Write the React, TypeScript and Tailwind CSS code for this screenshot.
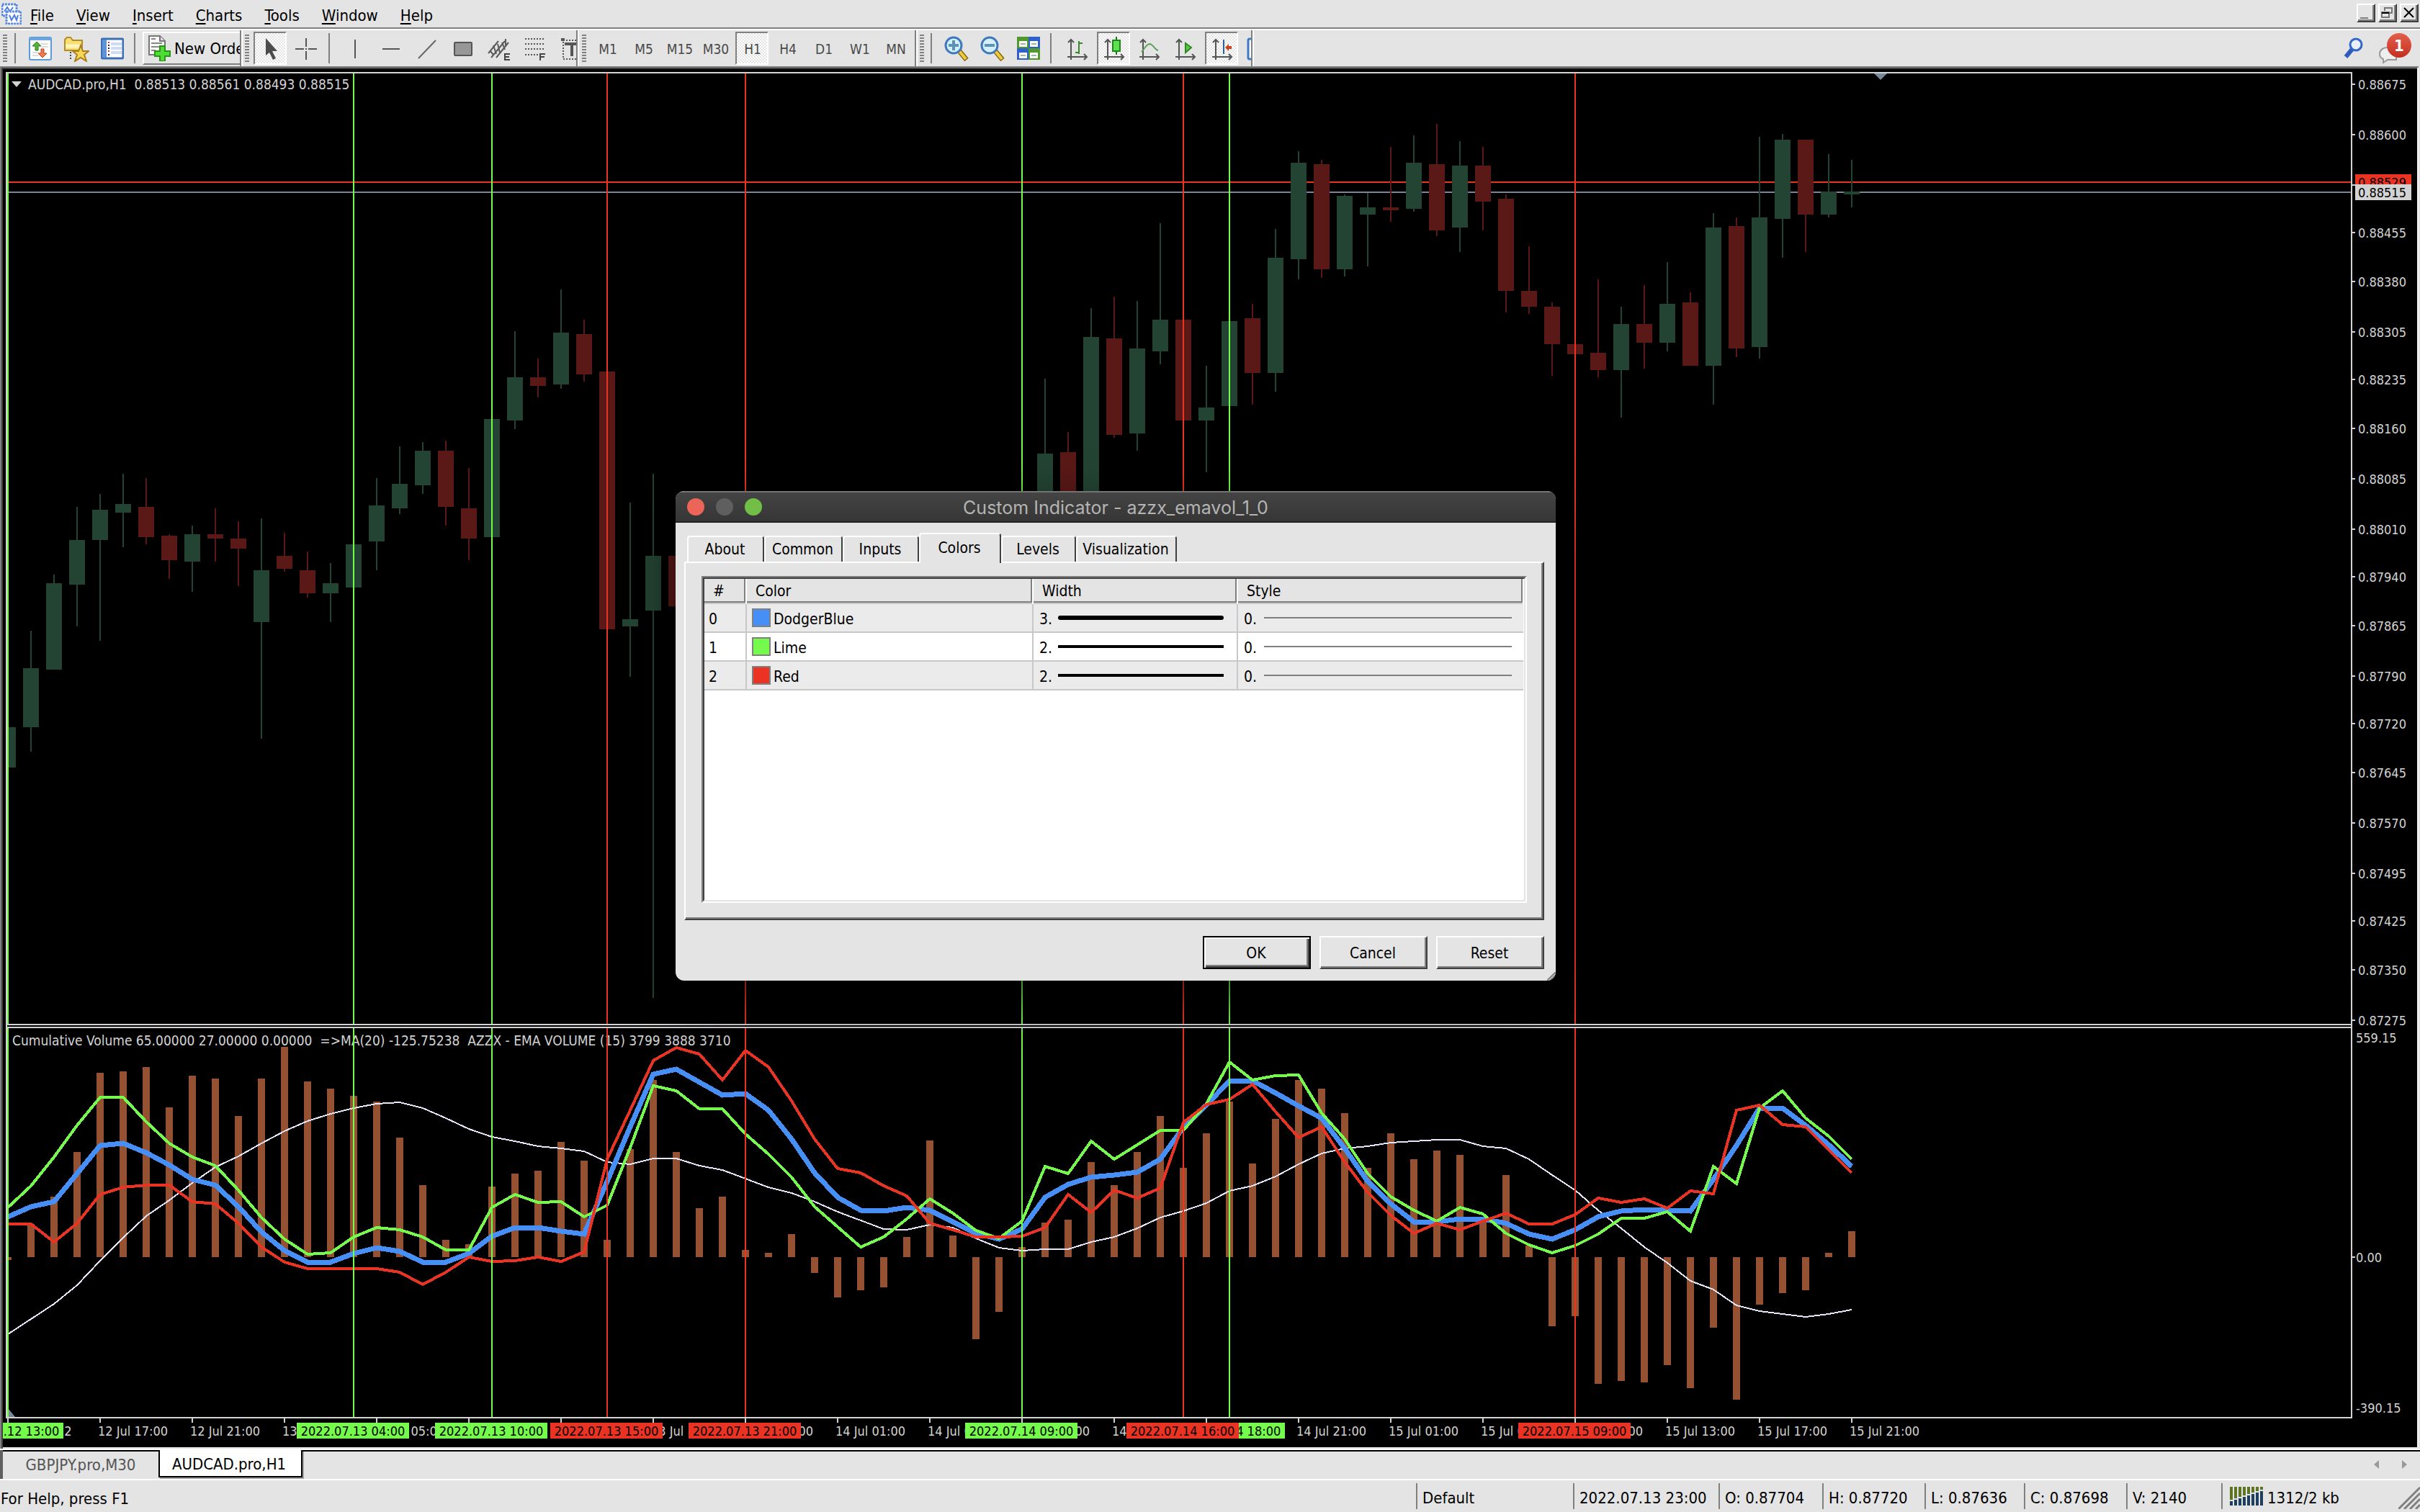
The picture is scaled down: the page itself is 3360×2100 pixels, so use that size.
import React from "react";

const SANS = "font-['DejaVu_Sans_Condensed','DejaVu_Sans',sans-serif]";

const GREEN = "#75fb4c";
const RED = "#eb3323";
const BLUE = "#458ff7";
const BAR = "#945233";
const BULL = "#244433";
const BEAR = "#5a1917";
const AXIS = "#d3d3d3";

const BAR_STEP = 32;
const barX = (index: number) => 11 + index * BAR_STEP;

type Candle = [index: number, up: 0 | 1, high: number, top: number, bottom: number, low: number];

const candles: Candle[] = [
  [0, 1, 1010, 1010, 1066, 1066],
  [1, 1, 876, 928, 1010, 1044],
  [2, 1, 798, 810, 930, 930],
  [3, 1, 704, 750, 812, 870],
  [4, 1, 686, 708, 750, 890],
  [5, 1, 658, 700, 712, 760],
  [6, 0, 664, 704, 746, 756],
  [7, 0, 742, 744, 778, 804],
  [8, 1, 730, 742, 780, 822],
  [9, 0, 706, 742, 748, 780],
  [10, 0, 724, 748, 762, 814],
  [11, 1, 720, 792, 864, 1026],
  [12, 0, 740, 772, 790, 794],
  [13, 0, 766, 792, 824, 830],
  [14, 1, 782, 810, 824, 864],
  [15, 1, 756, 756, 816, 816],
  [16, 1, 664, 702, 752, 792],
  [17, 1, 620, 672, 706, 714],
  [18, 1, 614, 626, 674, 686],
  [19, 0, 612, 626, 704, 730],
  [20, 0, 650, 706, 748, 778],
  [21, 1, 582, 582, 746, 746],
  [22, 1, 460, 524, 584, 596],
  [23, 0, 498, 524, 536, 552],
  [24, 1, 402, 462, 534, 540],
  [25, 0, 444, 464, 520, 530],
  [26, 0, 516, 516, 874, 874],
  [27, 1, 698, 860, 870, 940],
  [28, 1, 658, 772, 848, 1386],
  [29, 0, 772, 772, 842, 842],
  [45, 1, 526, 630, 720, 720],
  [46, 0, 600, 628, 720, 720],
  [47, 1, 428, 468, 720, 720],
  [48, 0, 412, 470, 604, 608],
  [49, 1, 418, 484, 602, 626],
  [50, 1, 310, 444, 488, 506],
  [51, 0, 444, 444, 584, 584],
  [52, 1, 508, 566, 584, 656],
  [53, 1, 446, 446, 564, 564],
  [54, 0, 422, 442, 518, 562],
  [55, 1, 318, 358, 518, 544],
  [56, 1, 210, 226, 360, 388],
  [57, 0, 222, 228, 374, 386],
  [58, 1, 270, 272, 374, 384],
  [59, 1, 268, 288, 298, 370],
  [60, 0, 204, 288, 292, 308],
  [61, 1, 188, 226, 290, 294],
  [62, 0, 172, 228, 320, 328],
  [63, 1, 196, 230, 316, 350],
  [64, 0, 204, 230, 280, 320],
  [65, 0, 270, 276, 404, 434],
  [66, 0, 342, 404, 426, 436],
  [67, 0, 420, 426, 478, 522],
  [68, 0, 478, 478, 492, 492],
  [69, 0, 388, 490, 514, 524],
  [70, 1, 426, 450, 514, 580],
  [71, 0, 396, 450, 476, 512],
  [72, 1, 364, 422, 476, 488],
  [73, 0, 406, 420, 508, 508],
  [74, 1, 296, 316, 508, 562],
  [75, 0, 302, 314, 484, 496],
  [76, 1, 190, 302, 482, 498],
  [77, 1, 186, 194, 304, 358],
  [78, 0, 194, 194, 298, 350],
  [79, 1, 214, 266, 298, 302],
  [80, 1, 222, 266, 270, 288],
];

const ZERO_Y = 1746;

const volumeEnds = [
  1750, 1700, 1662, 1600, 1490, 1488, 1482, 1538, 1494, 1498, 1550, 1498, 1454, 1502, 1512, 1522, 1530, 1580, 1646,
  1722, 1728, 1648, 1630, 1626, 1586, 1612, 1722, 1596, 1500, 1600, 1678, 1662, 1736, 1740, 1714, 1768, 1802, 1792,
  1788, 1718, 1584, 1716, 1860, 1822, 1732, 1698, 1694, 1614, 1646, 1600, 1550, 1622, 1574, 1530, 1616, 1554, 1500,
  1512, 1546, 1622, 1574, 1610, 1598, 1604, 1694, 1632, 1730, 1842, 1828, 1922, 1918, 1920, 1896, 1928, 1844, 1944,
  1812, 1796, 1792, 1740, 1710,
];

const upper = [
  725, 645, 540, 425, 323, 323, 412, 492, 541, 573, 660, 760, 838, 893, 888, 832, 798, 805, 831, 878, 878, 725, 677,
  705, 704, 757, 717, 508, 283, 301, 365, 367, 458, 530, 614, 722, 795, 868, 832, 765, 692, 745, 808, 835, 773, 576,
  601, 483, 549, 496, 444, 443, 348, 196, 262, 245, 243, 382, 476, 600, 685, 735, 774, 723, 748, 818, 860, 888, 863,
  820, 762, 763, 740, 810, 575, 638, 362, 300, 400, 464, 550,
];

const middle = [
  757, 722, 702, 602, 500, 490, 525, 570, 622, 642, 720, 812, 880, 922, 922, 892, 870, 883, 922, 922, 890, 829, 796,
  798, 811, 820, 630, 430, 240, 223, 268, 316, 310, 372, 475, 598, 688, 734, 738, 723, 733, 776, 818, 838, 803, 688,
  641, 615, 605, 597, 550, 433, 352, 264, 264, 308, 355, 400, 510, 630, 712, 776, 776, 766, 766, 780, 820, 838, 806,
  758, 736, 731, 734, 736, 622, 500, 362, 362, 425, 497, 575,
];

const lower = [
  785, 785, 848, 780, 677, 650, 642, 642, 704, 712, 780, 868, 922, 945, 945, 945, 945, 958, 1004, 960, 903, 920, 917,
  903, 920, 885, 550, 370, 192, 143, 168, 262, 155, 215, 338, 475, 582, 598, 646, 682, 782, 806, 830, 830, 829, 797,
  677, 741, 660, 690, 652, 415, 350, 331, 277, 375, 470, 431, 558, 670, 752, 817, 780, 805, 773, 745, 784, 784, 750,
  690, 706, 692, 727, 665, 673, 372, 353, 422, 431, 515, 598,
];

const average = [
  1184, 1130, 1075, 1005, 918, 833, 755, 698, 635, 577, 538, 492, 446, 409, 383, 363, 348, 342, 362, 399, 440, 467,
  484, 503, 509, 520, 560, 567, 547, 547, 572, 588, 619, 650, 672, 703, 739, 770, 802, 806, 786, 797, 835, 870, 880,
  875, 875, 850, 832, 800, 760, 738, 707, 665, 645, 612, 567, 528, 510, 503, 488, 484, 478, 478, 503, 510, 548, 605,
  660, 733, 800, 868, 926, 990, 1022, 1078, 1100, 1110, 1121, 1110, 1095,
];

const toPoints = (series: number[]) =>
  series.map((v, i) => `${barX(i)},${Math.round(1400 + v / 2.613)}`).join(" ");

const priceTicks: [string, number][] = [
  ["0.88675", 117],
  ["0.88600", 187],
  ["0.88455", 323],
  ["0.88380", 391],
  ["0.88305", 461],
  ["0.88235", 527],
  ["0.88160", 595],
  ["0.88085", 665],
  ["0.88010", 735],
  ["0.87940", 801],
  ["0.87865", 869],
  ["0.87790", 939],
  ["0.87720", 1005],
  ["0.87645", 1073],
  ["0.87570", 1143],
  ["0.87495", 1213],
  ["0.87425", 1279],
  ["0.87350", 1347],
  ["0.87275", 1417],
];

const timeTicks: string[] = [
  "12 Jul 2022",
  "12 Jul 17:00",
  "12 Jul 21:00",
  "13 Jul 01:00",
  "13 Jul 05:00",
  "13 Jul 09:00",
  "13 Jul 13:00",
  "13 Jul 17:00",
  "13 Jul 21:00",
  "14 Jul 01:00",
  "14 Jul 05:00",
  "14 Jul 09:00",
  "14 Jul 13:00",
  "14 Jul 17:00",
  "14 Jul 21:00",
  "15 Jul 01:00",
  "15 Jul 05:00",
  "15 Jul 09:00",
  "15 Jul 13:00",
  "15 Jul 17:00",
  "15 Jul 21:00",
];

const signals: { bar: number; color: string; label: string }[] = [
  { bar: 0, color: GREEN, label: "2022.07.12 13:00" },
  { bar: 15, color: GREEN, label: "2022.07.13 04:00" },
  { bar: 21, color: GREEN, label: "2022.07.13 10:00" },
  { bar: 26, color: RED, label: "2022.07.13 15:00" },
  { bar: 32, color: RED, label: "2022.07.13 21:00" },
  { bar: 44, color: GREEN, label: "2022.07.14 09:00" },
  { bar: 53, color: GREEN, label: "2022.07.14 18:00" },
  { bar: 51, color: RED, label: "2022.07.14 16:00" },
  { bar: 68, color: RED, label: "2022.07.15 09:00" },
];

function Chart() {
  return (
    <svg viewBox="0 92 3360 1920" className={`block w-full bg-black text-[18px] ${SANS}`} role="img" aria-label="AUDCAD.pro H1 chart">
      <defs>
        <clipPath id="plot">
          <rect x={10} y={102} width={3254} height={1866} />
        </clipPath>
        <clipPath id="timeAxis">
          <rect x={4} y={1970} width={3352} height={40} />
        </clipPath>
      </defs>

      <g shapeRendering="crispEdges">
        <rect x={0} y={92} width={3360} height={2} fill="#808080" />
        <rect x={0} y={94} width={3358} height={2} fill="#404040" />
        <rect x={0} y={92} width={2} height={1920} fill="#808080" />
        <rect x={2} y={94} width={2} height={1918} fill="#404040" />
        <rect x={3356} y={94} width={2} height={1918} fill="#f4f4f4" />
        <rect x={3358} y={92} width={2} height={1920} fill="#e4e4e4" />
        <rect x={4} y={2010} width={3356} height={2} fill="#e4e4e4" />

        <g clipPath="url(#plot)">
          <rect x={10} y={252} width={3254} height={2} fill={RED} />
          <rect x={10} y={266} width={3254} height={2} fill="#7b8798" />
          {candles.map(([i, up, high, top, bottom, low]) => (
            <g key={i} fill={up ? BULL : BEAR}>
              <rect x={barX(i) - 1} y={high} width={2} height={low - high} />
              <rect x={barX(i) - 11} y={top} width={22} height={bottom - top} />
            </g>
          ))}
          {volumeEnds.map((y, i) => (
            <rect key={i} x={barX(i) - 5} y={Math.min(y, ZERO_Y)} width={10} height={Math.abs(y - ZERO_Y)} fill={BAR} />
          ))}
          <polyline points={toPoints(average)} fill="none" stroke="#e6e6fa" strokeWidth={2} />
          <polyline points={toPoints(middle)} fill="none" stroke={BLUE} strokeWidth={7} />
          <polyline points={toPoints(upper)} fill="none" stroke={GREEN} strokeWidth={4} />
          <polyline points={toPoints(lower)} fill="none" stroke={RED} strokeWidth={4} />
        </g>
      </g>

      <g fill={AXIS} className="text-[19px]">
        <path d="M16 113h14l-7 8z" />
        <text x={39} y={124} className="whitespace-pre">{"AUDCAD.pro,H1  0.88513 0.88561 0.88493 0.88515"}</text>
        <text x={17} y={1452} className="whitespace-pre">
          {"Cumulative Volume 65.00000 27.00000 0.00000  =>MA(20) -125.75238  AZZX - EMA VOLUME (15) 3799 3888 3710"}
        </text>
      </g>
      <path d="M2602 102h18l-9 9z" fill="#778899" />
      <path d="M12 1957l9 11h-9z" fill="#778899" />

      <g shapeRendering="crispEdges">
        {signals.map(({ bar, color }) => (
          <rect key={bar} x={barX(bar) - 1} y={102} width={2} height={1866} fill={color} />
        ))}
        <rect x={8} y={1424} width={3258} height={2} fill="#000" />
        <g fill={AXIS}>
          <rect x={8} y={100} width={3258} height={2} />
          <rect x={8} y={100} width={2} height={1870} />
          <rect x={3264} y={100} width={2} height={1870} />
          <rect x={8} y={1422} width={3258} height={2} />
          <rect x={8} y={1426} width={3258} height={2} />
          <rect x={8} y={1968} width={3258} height={2} />
          {priceTicks.map(([label, y]) => (
            <rect key={label} x={3266} y={y - 1} width={4} height={2} />
          ))}
          <rect x={3266} y={256} width={4} height={2} />
          <rect x={3266} y={1745} width={4} height={2} />
          {timeTicks.map((label, i) => (
            <rect key={label} x={barX(i * 4) - 1} y={1970} width={2} height={6} />
          ))}
        </g>
      </g>

      <g fill={AXIS}>
        {priceTicks.map(([label, y]) => (
          <text key={label} x={3274} y={y + 7}>{label}</text>
        ))}
        <text x={3271} y={1448}>559.15</text>
        <text x={3271} y={1753}>0.00</text>
        <text x={3271} y={1962}>-390.15</text>
      </g>
      <rect x={3270} y={242} width={78} height={22} fill={RED} />
      <text x={3274} y={260} fill="#000">0.88529</text>
      <rect x={3270} y={256} width={78} height={22} fill={AXIS} />
      <text x={3274} y={274} fill="#000">0.88515</text>

      <g clipPath="url(#timeAxis)">
        {timeTicks.map((label, i) => (
          <text key={label} x={barX(i * 4) - 3} y={1994} fill={AXIS}>{label}</text>
        ))}
        {signals.map(({ bar, color, label }) => (
          <g key={bar}>
            <rect x={barX(bar) - 79} y={1976} width={156} height={22} fill={color} />
            <text x={barX(bar) - 1} y={1994} textAnchor="middle" fill="#000">{label}</text>
          </g>
        ))}
      </g>
    </svg>
  );
}

function Icon({ children, w = 32 }: { children: React.ReactNode; w?: number }) {
  return (
    <svg viewBox={`0 0 ${w} 36`} width={w} height={36} className="shrink-0" aria-hidden="true">
      {children}
    </svg>
  );
}

function Grip() {
  return (
    <div className="h-[38px] w-[6px] shrink-0 bg-[repeating-linear-gradient(#808080_0_2px,transparent_2px_4px)]" />
  );
}

function Sep() {
  return <div className="h-[42px] w-[2px] shrink-0 bg-[#808080]" />;
}

function ToolButton({ label, pressed, children }: { label: string; pressed?: boolean; children: React.ReactNode }) {
  return (
    <button
      type="button"
      aria-label={label}
      aria-pressed={pressed}
      className={
        pressed
          ? "mx-[2px] flex h-[46px] w-[46px] shrink-0 items-center justify-center border-2 border-t-[#808080] border-r-white border-b-white border-l-[#808080] bg-[repeating-conic-gradient(#ffffff_0_25%,#e4e4e4_0_50%)] bg-[length:4px_4px] pt-[2px] pl-[2px]"
          : "flex h-[46px] w-[50px] shrink-0 items-center justify-center pt-[2px]"
      }
    >
      {children}
    </button>
  );
}

const timeframes = ["M1", "M5", "M15", "M30", "H1", "H4", "D1", "W1", "MN"];

function Magnifier({ plus }: { plus: boolean }) {
  return (
    <Icon w={34}>
      <path d="M21 21l10 12" stroke="#8a6a14" strokeWidth="7" />
      <path d="M21 21l9 11" stroke="#eecb3c" strokeWidth="4" />
      <circle cx="13" cy="13" r="11" fill="#d5effc" stroke="#3f78bd" strokeWidth="3" />
      <path d={plus ? "M6 13h14M13 6v14" : "M6 13h14"} stroke="#5b93b8" strokeWidth="4" />
    </Icon>
  );
}

function AxesIcon({ children }: { children: React.ReactNode }) {
  return (
    <Icon w={30}>
      <g fill="none" stroke="#555" strokeWidth="2">
        <path d="M6 5v28M1 29h27M2 9l4-4 4 4M24 25l4 4-4 4" />
      </g>
      {children}
    </Icon>
  );
}

function Toolbar() {
  return (
    <div className="flex h-[50px] items-center overflow-hidden">
      <div className="flex h-full w-[335px] shrink-0 items-center overflow-hidden border-r-2 border-[#808080] pl-[4px]">
        <Grip />
        <div className="w-[10px] shrink-0" />
        <Sep />
        <div className="w-[9px] shrink-0" />
        <ToolButton label="Market Watch">
          <Icon>
            <rect x="1" y="2" width="30" height="31" rx="2" fill="#fff" stroke="#5b9bdc" strokeWidth="2" />
            <rect x="1" y="2" width="30" height="4" fill="#6aa5e0" />
            <path d="M17 11h10M17 15h10M5 23h8M5 27h8" stroke="#ddd" strokeWidth="2" />
            <path d="M11 8l6 6h-4v6H9v-6H5z" fill="#54b536" stroke="#2c7d1c" />
            <path d="M19 30l6-6h-4v-6h-4v6h-4z" fill="#f07b50" stroke="#b8431f" />
          </Icon>
        </ToolButton>
        <ToolButton label="Favorites">
          <Icon w={36}>
            <path d="M2 20V5l3-3h5l3 4h13v14z" fill="#f8df75" stroke="#b58c21" strokeWidth="2" />
            <path d="M3 14h22" stroke="#fdf3bb" strokeWidth="5" />
            <path d="M10 22v12" stroke="#444" strokeWidth="2" strokeDasharray="2 2" />
            <path d="M24 13l3 8h8l-6 5 3 9-8-5-8 5 3-9-6-5h8z" fill="#f6d654" stroke="#a6811d" strokeWidth="2" />
          </Icon>
        </ToolButton>
        <ToolButton label="Navigator">
          <Icon>
            <rect x="1" y="4" width="30" height="27" rx="2" fill="#fff" stroke="#3c6fb4" strokeWidth="3" />
            <rect x="2" y="5" width="6" height="25" fill="#5f93d6" />
            <path d="M14 11h15M14 17h15M14 23h15" stroke="#cfdcf8" strokeWidth="4" />
            <path d="M11 8v2M11 20v2" stroke="#e03030" strokeWidth="2" />
            <path d="M11 12v6M11 25v4" stroke="#222" strokeWidth="2" strokeDasharray="2 2" />
          </Icon>
        </ToolButton>
        <div className="w-[5px] shrink-0" />
        <Sep />
        <div className="w-[10px] shrink-0" />
        <button type="button" className="flex h-[46px] w-[170px] shrink-0 items-center gap-[5px] border-2 border-t-white border-r-[#808080] border-b-[#808080] border-l-white pl-[5px] text-[22px] whitespace-nowrap">
          <Icon>
            <path d="M2 1h15l7 7v19H2z" fill="#fbfbfb" stroke="#777" strokeWidth="2" />
            <path d="M17 1v7h7" fill="#ddd" stroke="#777" strokeWidth="2" />
            <path d="M5 5h6M5 11h15M5 16h14M5 21h6" stroke="#888" strokeWidth="2" />
            <path d="M17 15h7v7h7v7h-7v7h-7v-7h-7v-7h7z" fill="#4fdc34" stroke="#279516" strokeWidth="2" />
          </Icon>
          New Order
        </button>
      </div>

      <div className="flex h-full w-[467px] shrink-0 items-center overflow-hidden border-r-2 border-l-2 border-r-[#808080] border-l-white pl-[3px]">
        <Grip />
        <div className="w-[4px] shrink-0" />
        <ToolButton label="Cursor" pressed>
          <Icon w={20}>
            <path d="M3 3v24l5-4 5 10 4-2-5-10h7z" fill="#4c4c4c" />
          </Icon>
        </ToolButton>
        <ToolButton label="Crosshair">
          <Icon w={30}>
            <path d="M15 3v12M15 21v12M0 18h12M18 18h12M14 18h2" stroke="#555" strokeWidth="2" />
          </Icon>
        </ToolButton>
        <div className="w-[6px] shrink-0" />
        <Sep />
        <div className="w-[10px] shrink-0" />
        <ToolButton label="Vertical Line">
          <Icon>
            <path d="M16 5v26" stroke="#555" strokeWidth="2" />
          </Icon>
        </ToolButton>
        <ToolButton label="Horizontal Line">
          <Icon>
            <path d="M4 18h24" stroke="#555" strokeWidth="2" />
          </Icon>
        </ToolButton>
        <ToolButton label="Trendline">
          <Icon>
            <path d="M4 31L28 6" stroke="#666" strokeWidth="2" />
          </Icon>
        </ToolButton>
        <ToolButton label="Rectangle">
          <Icon>
            <rect x="4" y="9" width="24" height="18" rx="1" fill="#979797" stroke="#555" strokeWidth="2" />
          </Icon>
        </ToolButton>
        <ToolButton label="Equidistant Channel">
          <Icon>
            <path d="M1 24L15 7M5 30L24 7M12 30L29 9M3 20l5 6M8 13l4 12M14 11l3 12M20 9l4 10M25 4v10" stroke="#5b5b5b" strokeWidth="2" fill="none" />
            <path d="M31 25h-7v8h7M24 29h6" stroke="#444" strokeWidth="2" fill="none" />
          </Icon>
        </ToolButton>
        <ToolButton label="Fibonacci Retracement">
          <Icon>
            <path d="M2 4h28M2 11h28M2 18h28M2 26h18" stroke="#555" strokeWidth="2" strokeDasharray="2 2" />
            <path d="M23 34v-9h7M23 29h6" stroke="#444" strokeWidth="2" fill="none" />
          </Icon>
        </ToolButton>
        <ToolButton label="Text">
          <Icon>
            <rect x="5" y="6" width="26" height="26" fill="none" stroke="#555" strokeWidth="2" strokeDasharray="2 2" />
            <rect x="2" y="3" width="5" height="4" fill="#555" />
            <path d="M9 13v-2h16v2M17 11v17" stroke="#555" strokeWidth="4" fill="none" />
          </Icon>
        </ToolButton>
      </div>

      <div className="flex h-full w-[470px] shrink-0 items-center overflow-hidden border-r-2 border-l-2 border-r-[#808080] border-l-white pl-[4px] text-[19px] text-[#4a4a4a]">
        <Grip />
        <div className="w-[5px] shrink-0" />
        {timeframes.map((t) => (
          <ToolButton key={t} label={t} pressed={t === "H1"}>
            {t}
          </ToolButton>
        ))}
      </div>

      <div className="flex h-full w-[467px] shrink-0 items-center overflow-hidden border-r-2 border-l-2 border-r-[#808080] border-l-white pl-[3px]">
        <Grip />
        <div className="w-[9px] shrink-0" />
        <Sep />
        <div className="w-[9px] shrink-0" />
        <ToolButton label="Zoom In">
          <Magnifier plus />
        </ToolButton>
        <ToolButton label="Zoom Out">
          <Magnifier plus={false} />
        </ToolButton>
        <ToolButton label="Tile Windows">
          <Icon>
            <rect x="0" y="1" width="16" height="16" fill="#4f9a2b" />
            <rect x="16" y="1" width="16" height="16" fill="#2d5fd0" />
            <rect x="0" y="17" width="16" height="16" fill="#2d5fd0" />
            <rect x="16" y="17" width="16" height="16" fill="#4f9a2b" />
            <path d="M3 7h11v8H3zM18 7h11v8H18zM3 23h11v8H3zM18 23h11v8H18z" fill="#fff" />
            <path d="M5 11h7M20 11h7M5 27h7M20 27h7" stroke="#9ab8a0" strokeWidth="2" />
          </Icon>
        </ToolButton>
        <div className="w-[5px] shrink-0" />
        <Sep />
        <div className="w-[11px] shrink-0" />
        <ToolButton label="Bar Chart">
          <AxesIcon>
            <path d="M17 7v18M12 23h5M17 10h5" stroke="#3a8a2c" strokeWidth="2" />
          </AxesIcon>
        </ToolButton>
        <ToolButton label="Candlesticks" pressed>
          <AxesIcon>
            <path d="M18 1v25" stroke="#1c7a14" strokeWidth="2" />
            <rect x="13" y="6" width="10" height="15" fill="#5fe052" stroke="#1c8a14" strokeWidth="2" />
          </AxesIcon>
        </ToolButton>
        <ToolButton label="Line Chart">
          <AxesIcon>
            <path d="M4 22c4-4 6-10 11-11 5 0 7 8 12 9" stroke="#5aa352" strokeWidth="2" fill="none" />
          </AxesIcon>
        </ToolButton>
        <ToolButton label="Auto Scroll">
          <AxesIcon>
            <path d="M15 10l8 6-8 7z" fill="#5cc648" stroke="#2c8a20" strokeWidth="2" />
          </AxesIcon>
        </ToolButton>
        <ToolButton label="Chart Shift" pressed>
          <AxesIcon>
            <path d="M17 5v20" stroke="#2a6496" strokeWidth="2" />
            <path d="M19 16l5-5v3h4v4h-4v3z" fill="#c8421c" />
          </AxesIcon>
        </ToolButton>
        <ToolButton label="Indicators">
          <Icon>
            <rect x="3" y="4" width="26" height="28" rx="2" fill="#fff" stroke="#3c7ac8" strokeWidth="3" />
          </Icon>
        </ToolButton>
      </div>

      <div className="h-full flex-1 border-l-2 border-white" />
      <div className="flex shrink-0 items-center gap-[20px] pr-[12px]">
        <button type="button" aria-label="Search">
          <Icon w={28}>
            <path d="M12 19L3 30" stroke="#2f5cbc" strokeWidth="6" />
            <circle cx="17" cy="13" r="8" fill="#e9effb" stroke="#3465c8" strokeWidth="3" />
          </Icon>
        </button>
        <button type="button" aria-label="Notifications" className="relative flex h-[46px] w-[46px] items-end">
          <svg viewBox="0 0 30 28" width={30} height={28} aria-hidden="true">
            <path d="M13 4c-7 0-11 4-11 9 0 4 2 6 5 7v5l6-4h12V4z" fill="#eee" stroke="#999" strokeWidth="2" />
          </svg>
          <span className="absolute top-[2px] right-0 flex size-[34px] items-center justify-center rounded-full bg-linear-to-b from-[#e2604a] to-[#c42d20] text-[22px] font-bold text-white">
            1
          </span>
        </button>
      </div>
    </div>
  );
}

const menus = ["File", "View", "Insert", "Charts", "Tools", "Window", "Help"];

function WindowButton({ label, children }: { label: string; children: React.ReactNode }) {
  return (
    <button type="button" aria-label={label} className="size-[26px] border-2 border-t-white border-r-[#404040] border-b-[#404040] border-l-white shadow-[inset_-2px_-2px_0_#808080]">
      <svg viewBox="0 0 22 22" width={22} height={22} fill="none" strokeWidth="2" aria-hidden="true">
        {children}
      </svg>
    </button>
  );
}

function MenuBar() {
  return (
    <div className="flex h-[42px] items-center justify-between border-b-2 border-white shadow-[inset_0_-2px_0_#808080]">
      <div className="flex items-center">
        <svg viewBox="0 0 28 30" width={28} height={30} className="mb-[2px] ml-[2px]" aria-hidden="true">
          <rect x="1" y="2" width="20" height="16" fill="#fff" stroke="#5b8ae0" strokeWidth="3" strokeDasharray="3 1" />
          <path d="M4 12l4-6 4 6 4-6" stroke="#4b7de0" strokeWidth="2" fill="none" />
          <rect x="7" y="12" width="20" height="17" fill="#fff" stroke="#5b8ae0" strokeWidth="3" strokeDasharray="3 1" />
          <path d="M11 17l3 7 4-7 3 7 2-7" stroke="#4b7de0" strokeWidth="2" fill="none" />
        </svg>
        <nav className="ml-[12px] flex gap-[31px] pt-[4px] text-[22px] leading-[36px]">
          {menus.map((m) => (
            <button key={m} type="button">
              <span className="underline decoration-2 underline-offset-[3px]">{m[0]}</span>
              {m.slice(1)}
            </button>
          ))}
        </nav>
      </div>
      <div className="flex gap-[4px] pr-[2px] pb-[4px]">
        <WindowButton label="Minimize">
          <path d="M3 18h11" stroke="#808080" />
        </WindowButton>
        <WindowButton label="Restore">
          <path d="M7 8V4h10v7h-4" stroke="#777" />
          <path d="M3 10h10v7H3z" stroke="#777" />
          <path d="M3 11h10" stroke="#000" />
        </WindowButton>
        <WindowButton label="Close">
          <path d="M4 4l13 13M17 4L4 17" stroke="#000" />
        </WindowButton>
      </div>
    </div>
  );
}

const tabs: { name: string; style: string }[] = [
  { name: "About", style: "w-[107px]" },
  { name: "Common", style: "w-[109px]" },
  { name: "Inputs", style: "w-[106px]" },
  { name: "Colors", style: "w-[114px]" },
  { name: "Levels", style: "w-[104px]" },
  { name: "Visualization", style: "w-[140px]" },
];

const rows: { swatch: string; name: string; width: string; line: string; row: string }[] = [
  { swatch: "bg-[#458ff7]", name: "DodgerBlue", width: "3.", line: "h-[6px] rounded-full", row: "h-[40px] bg-[#ebebeb]" },
  { swatch: "bg-[#75fb4c]", name: "Lime", width: "2.", line: "h-[4px]", row: "h-[40px] bg-white" },
  { swatch: "bg-[#eb3323]", name: "Red", width: "2.", line: "h-[4px]", row: "h-[40px] bg-[#ebebeb]" },
];

function Dialog() {
  return (
    <section
      role="dialog"
      aria-label="Custom Indicator - azzx_emavol_1_0"
      className="absolute top-[682px] left-[938px] w-[1222px] overflow-hidden rounded-[12px] bg-[#e4e4e4] shadow-[0_24px_70px_rgba(0,0,0,0.6)]"
    >
      <header className="relative flex h-[44px] items-center justify-center border-t-2 border-b-2 border-t-[#747474] border-b-[#222] bg-linear-to-b from-[#444] to-[#363636]">
        <div className="absolute left-[16px] flex gap-[16px]">
          <button type="button" aria-label="Close" className="size-[24px] rounded-full bg-[#ec6559]" />
          <button type="button" aria-label="Minimize" className="size-[24px] rounded-full bg-[#5f5f5f]" />
          <button type="button" aria-label="Zoom" className="size-[24px] rounded-full bg-[#71bf47]" />
        </div>
        <h1 className="pt-[2px] font-['Inter',sans-serif] text-[25px] leading-none text-[#b4b4b4]">Custom Indicator - azzx_emavol_1_0</h1>
      </header>

      <div className="px-[12px] pt-[14px] pr-[16px] pb-[16px] text-[21px] leading-[26px]">
        <div role="tablist" className="relative ml-[4px] flex items-end">
          {tabs.map(({ name, style }) => {
            const selected = name === "Colors";
            return (
              <button
                key={name}
                type="button"
                role="tab"
                aria-selected={selected}
                className={`${style} rounded-t-[4px] border-2 border-b-0 border-t-white border-r-[#404040] border-l-white pr-[2px] ${
                  selected ? "z-10 -mb-[2px] h-[42px] bg-[#e4e4e4] pb-[2px]" : "h-[36px]"
                }`}
              >
                {name}
              </button>
            );
          })}
        </div>
        <div
          role="tabpanel"
          className="h-[498px] border-2 border-t-white border-r-[#404040] border-b-[#404040] border-l-white px-[22px] pt-[18px] shadow-[inset_-2px_-2px_0_#808080]"
        >
          <div className="h-[454px] border-2 border-t-[#808080] border-r-white border-b-white border-l-[#808080]">
            <div className="h-full border-2 border-t-[#404040] border-r-[#e4e4e4] border-b-[#e4e4e4] border-l-[#404040] bg-white">
              <table className="w-full table-fixed border-collapse text-left">
                <colgroup>
                  <col className="w-[58px]" />
                  <col className="w-[398px]" />
                  <col className="w-[284px]" />
                  <col />
                </colgroup>
                <thead>
                  <tr className="h-[34px] border-b-2 border-[#c8c8c8] bg-[#e4e4e4]">
                    {["#", "Color", "Width", "Style"].map((h) => (
                      <th
                        key={h}
                        scope="col"
                        className="border-r-2 border-r-white pl-[12px] font-normal shadow-[inset_-2px_-2px_0_#808080]"
                      >
                        {h}
                      </th>
                    ))}
                  </tr>
                </thead>
                <tbody>
                  {rows.map((r, i) => (
                    <tr key={r.name} className={`${r.row} border-b-2 border-[#c8c8c8]`}>
                      <td className="border-r-2 border-[#c8c8c8] pt-[4px] pl-[6px]">{i}</td>
                      <td className="border-r-2 border-[#c8c8c8] pl-[7px]">
                        <div className="flex items-center gap-[4px]">
                          <span className={`size-[26px] border-2 border-[#808080] ${r.swatch}`} />
                          <span className="pt-[4px]">{r.name}</span>
                        </div>
                      </td>
                      <td className="border-r-2 border-[#c8c8c8] pr-[18px] pl-[8px]">
                        <div className="flex items-center gap-[8px]">
                          <span className="pt-[4px]">{r.width}</span>
                          <span className={`flex-1 bg-black ${r.line}`} />
                        </div>
                      </td>
                      <td className="pr-[16px] pl-[8px]">
                        <div className="flex items-center gap-[10px]">
                          <span className="pt-[4px]">0.</span>
                          <span className="h-[2px] flex-1 bg-[#808080]" />
                        </div>
                      </td>
                    </tr>
                  ))}
                </tbody>
              </table>
            </div>
          </div>
        </div>
        <div className="mt-[22px] flex justify-end gap-[12px]">
          <button type="button" className="h-[46px] w-[150px] border-2 border-black pt-[2px] pr-[2px] shadow-[inset_2px_2px_0_#ffffff,inset_-2px_-2px_0_#404040,inset_-4px_-4px_0_#808080]">
            OK
          </button>
          <button type="button" className="h-[46px] w-[150px] border-2 border-t-white border-r-[#404040] border-b-[#404040] border-l-white pt-[2px] pr-[2px] shadow-[inset_-2px_-2px_0_#808080]">
            Cancel
          </button>
          <button type="button" className="h-[46px] w-[150px] border-2 border-t-white border-r-[#404040] border-b-[#404040] border-l-white pt-[2px] pr-[2px] shadow-[inset_-2px_-2px_0_#808080]">
            Reset
          </button>
        </div>
      </div>
      <svg viewBox="0 0 12 12" width={12} height={12} className="absolute right-0 bottom-0" aria-hidden="true">
        <path d="M0 12L12 0M4 12l8-8M8 12l4-4" stroke="#808080" strokeWidth="2" />
      </svg>
    </section>
  );
}

function ChartTabs() {
  return (
    <div className="flex h-[44px] items-start justify-between border-t-2 border-b-2 border-white pr-[18px] text-[22px] shadow-[inset_0_2px_0_#000000]">
      <div className="flex">
        <button type="button" className="h-[40px] w-[220px] border-l-4 border-[#606060] text-[#555]">
          GBPJPY.pro,M30
        </button>
        <button type="button" className="h-[38px] w-[200px] border-2 border-t-0 border-black bg-white pt-[2px] pr-[4px] shadow-[2px_2px_0_#a0a0a0]">
          AUDCAD.pro,H1
        </button>
      </div>
      <div className="flex h-full items-center gap-[32px]">
        <button type="button" aria-label="Scroll left" className="h-0 w-0 border-y-[6px] border-r-[7px] border-y-transparent border-r-[#999]" />
        <button type="button" aria-label="Scroll right" className="h-0 w-0 border-y-[6px] border-l-[7px] border-y-transparent border-l-[#999]" />
      </div>
    </div>
  );
}

const cells: { text: string; style: string }[] = [
  { text: "Default", style: "w-[218px]" },
  { text: "2022.07.13 23:00", style: "w-[202px]" },
  { text: "O: 0.87704", style: "w-[144px]" },
  { text: "H: 0.87720", style: "w-[142px]" },
  { text: "L: 0.87636", style: "w-[138px]" },
  { text: "C: 0.87698", style: "w-[142px]" },
  { text: "V: 2140", style: "w-[132px]" },
];

function StatusBar() {
  return (
    <footer className="flex h-[44px] items-center text-[22px] leading-[32px]">
      <div className="flex-1 pt-[7px] pl-[1px]">For Help, press F1</div>
      <div className="flex h-[36px] items-center">
        {cells.map(({ text, style }) => (
          <div key={text} className={`${style} h-full border-l-2 border-[#808080] pt-[5px] pl-[7px] whitespace-nowrap`}>
            {text}
          </div>
        ))}
        <div className="flex h-full w-[276px] items-center border-l-2 border-[#808080] pl-[10px]">
          <svg viewBox="0 0 46 26" width={46} height={26} aria-hidden="true">
            {[0, 1, 2, 3, 4, 5, 6, 7].map((i) => (
              <g key={i}>
                <rect x={i * 6} y={0} width={4} height={18 - i * 2} fill="#5f7422" />
                <rect x={i * 6} y={20 - i * 2} width={4} height={6 + i * 2} fill="#1d3e5c" />
              </g>
            ))}
          </svg>
          <span className="pt-[6px] pl-[6px]">1312/2 kb</span>
          <svg viewBox="0 0 30 36" width={30} height={36} className="ml-auto" aria-hidden="true">
            <path d="M0 36L30 6M8 36l22-22M16 36l14-14M24 36l6-6" stroke="#808080" strokeWidth="3" />
          </svg>
        </div>
      </div>
    </footer>
  );
}

export default function App() {
  return (
    <main className={`relative flex min-h-screen flex-col bg-[#e4e4e4] text-black ${SANS}`}>
      <MenuBar />
      <Toolbar />
      <Chart />
      <ChartTabs />
      <StatusBar />
      <Dialog />
    </main>
  );
}
